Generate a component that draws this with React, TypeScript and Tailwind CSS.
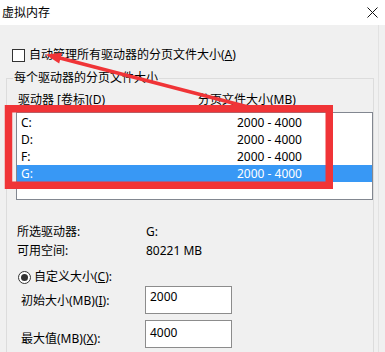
const rows = [
  { drive: "C:", size: "2000 - 4000" },
  { drive: "D:", size: "2000 - 4000" },
  { drive: "F:", size: "2000 - 4000" },
  { drive: "G:", size: "2000 - 4000", selected: true },
];

function Annotations() {
  // red box + arrow drawn over the dialog
  return (
    <svg className="pointer-events-none absolute left-0 top-0" width="385" height="352" viewBox="0 0 385 352">
      <rect x="8.5" y="108.75" width="320.75" height="76.5" fill="none" stroke="#f03437" strokeWidth="7.5" />
      <line x1="252" y1="108" x2="58" y2="57.5" stroke="#f03437" strokeWidth="3.5" />
      <polygon points="45.5,54.5 62,52.8 59.2,63.5" fill="#f03437" />
    </svg>
  );
}

export default function App() {
  return (
    <div className="relative h-[352px] w-[385px] overflow-hidden bg-[#f0f0f0] text-[12px] leading-[16px] text-black [font-family:'Noto_Sans','Noto_Sans_CJK_SC',sans-serif]">
      <div className="flex h-[25px] items-center justify-between bg-white pl-[2px] pr-[7px]">
        <span>虚拟内存</span>
        <svg width="11" height="11" viewBox="0 0 11 11">
          <path d="M0.5 0.5L10.5 10.5M10.5 0.5L0.5 10.5" stroke="#111" strokeWidth="1" />
        </svg>
      </div>

      <div className="mr-[6px] h-[327px] border-r border-[#e2e2e2]">
        <div className="flex items-center pl-[12px] pt-[22px]">
          <span className="h-[13px] w-[13px] border border-[#333] bg-white" />
          <span className="ml-[4px]">
            自动管理所有驱动器的分页文件大小(<span className="underline">A</span>)
          </span>
        </div>

        <div className="ml-[6px] mr-[4px] mt-[15px] h-[300px] border border-[#dcdcdc]">
          <div className="-mt-[9px] ml-[6px] w-fit bg-[#f0f0f0] px-[1px]">每个驱动器的分页文件大小</div>

          <div className="mt-[6px] flex pl-[11px]">
            <span className="w-[180px]">
              驱动器 [卷标](<span className="underline">D</span>)
            </span>
            <span>分页文件大小(MB)</span>
          </div>

          <div className="ml-[9px] mt-[4px] h-[88px] border border-[#828790] bg-white pt-[1px]">
            {rows.map((r) => (
              <div
                key={r.drive}
                className={`flex h-[17px] items-center ${r.selected ? "bg-[#3898f5] text-white" : ""}`}
              >
                <span className="w-[205px] pl-[4px]">{r.drive}</span>
                <span className="w-[80px] text-right">{r.size}</span>
              </div>
            ))}
          </div>

          <div className="ml-[10px] mt-[24px] flex">
            <span className="w-[129px]">所选驱动器:</span>
            <span>G:</span>
          </div>
          <div className="ml-[10px] mt-[3px] flex">
            <span className="w-[129px]">可用空间:</span>
            <span>80221 MB</span>
          </div>

          <div className="ml-[11px] mt-[10px] flex items-center">
            <span className="flex h-[13px] w-[13px] items-center justify-center rounded-full border border-[#333] bg-white">
              <span className="h-[7px] w-[7px] rounded-full bg-[#333]" />
            </span>
            <span className="ml-[3px]">
              自定义大小(<span className="underline">C</span>):
            </span>
          </div>

          <div className="ml-[14px] mt-[1px] flex">
            <span className="mt-[7px] w-[124px]">
              初始大小(MB)(<span className="underline">I</span>):
            </span>
            <div className="h-[28px] w-[87px] border border-[#8c8c8c] bg-white pl-[4px] pt-[2px]">2000</div>
          </div>
          <div className="ml-[14px] mt-[6px] flex">
            <span className="mt-[11px] w-[124px]">
              最大值(MB)(<span className="underline">X</span>):
            </span>
            <div className="h-[28px] w-[87px] border border-[#8c8c8c] bg-white pl-[4px] pt-[4px]">4000</div>
          </div>
        </div>
      </div>

      <Annotations />
    </div>
  );
}
